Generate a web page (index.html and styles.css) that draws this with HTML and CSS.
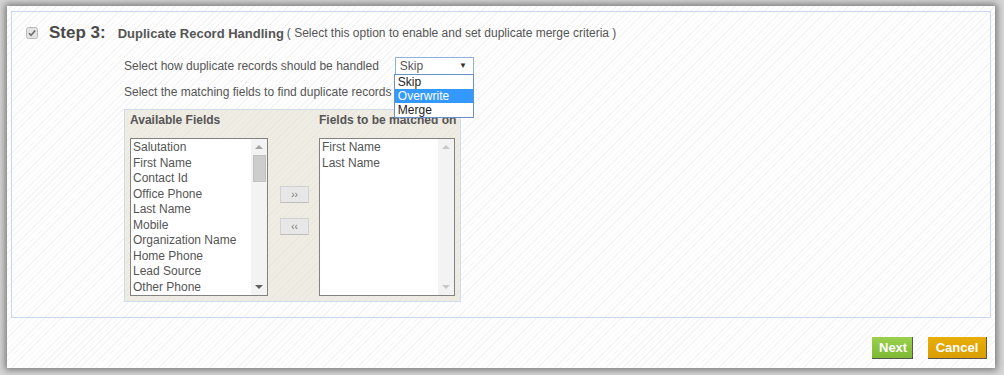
FILE: index.html
```html
<!DOCTYPE html>
<html lang="en">
<head>
    <meta charset="UTF-8">
    <title>Import - Duplicate handling</title>
    <link rel="stylesheet" href="styles.css">
</head>
<body>
<div id="page">
    <div class="step-box">
        <div class="step-head">
            <span class="check">
                <svg width="12" height="12" viewBox="0 0 12 12">
                    <rect x="0.5" y="0.5" width="11" height="11" rx="2" fill="#e4e4e4" stroke="#b8b8b8"/>
                    <path d="M3 6.2 L5 8.4 L9.2 3.4" fill="none" stroke="#6a6a6a" stroke-width="1.6"/>
                </svg>
            </span>
            <span class="step-no">Step 3:</span>
            <span class="step-title">Duplicate Record Handling</span>
            <span class="step-note">( Select this option to enable and set duplicate merge criteria )</span>
        </div>
        <div class="step-body">
            <div class="row">
                <span>Select how duplicate records should be handled</span>
                <div class="combo">
                    <div class="combo-value">Skip<span class="arrow">&#9660;</span></div>
                    <ul class="combo-list">
                        <li>Skip</li>
                        <li class="picked">Overwrite</li>
                        <li>Merge</li>
                    </ul>
                </div>
            </div>
            <div class="row">Select the matching fields to find duplicate records</div>
            <div class="fields">
                <div class="col">
                    <div class="col-title">Available Fields</div>
                    <div class="listbox left">
                        <ul>
                            <li>Salutation</li>
                            <li>First Name</li>
                            <li>Contact Id</li>
                            <li>Office Phone</li>
                            <li>Last Name</li>
                            <li>Mobile</li>
                            <li>Organization Name</li>
                            <li>Home Phone</li>
                            <li>Lead Source</li>
                            <li>Other Phone</li>
                        </ul>
                        <div class="scroll">
                            <span class="up"></span>
                            <span class="thumb"></span>
                            <span class="down"></span>
                        </div>
                    </div>
                </div>
                <div class="movers">
                    <button class="mover">&rsaquo;&rsaquo;</button>
                    <button class="mover">&lsaquo;&lsaquo;</button>
                </div>
                <div class="col">
                    <div class="col-title">Fields to be matched on</div>
                    <div class="listbox right">
                        <ul>
                            <li>First Name</li>
                            <li>Last Name</li>
                        </ul>
                        <div class="scroll off">
                            <span class="up"></span>
                            <span class="down"></span>
                        </div>
                    </div>
                </div>
            </div>
        </div>
    </div>
    <div class="actions">
        <button class="btn next">Next</button>
        <button class="btn cancel">Cancel</button>
    </div>
</div>
</body>
</html>
```

FILE: styles.css
```css
html{
    margin:0px;
    padding:0px;
}
body{
    margin:0px;
    padding:6px 9px 7px 7px;
    width:988px;
    height:362px;
    background-color:#d6d6d6;
    font-family:"Liberation Sans", Arial, sans-serif;
    color:#555;
}
#page{
    width:988px;
    height:362px;
    box-sizing:border-box;
    padding:5px 5px 0px 4px;
    background-color:#fff;
    background-image:repeating-linear-gradient(-45deg, #fff 0px, #fff 3px, #f4f4f4 3px, #f4f4f4 4px);
    box-shadow:0px 0px 7px 2px rgba(0,0,0,0.45);
    display:flex;
    flex-direction:column;
}
.step-box{
    width:980px;
    height:307px;
    box-sizing:border-box;
    border:1px solid #c9d7ef;
    padding:14px 0px 0px 14px;
}
.step-head{
    display:flex;
    align-items:center;
    height:14px;
}
.check{
    display:flex;
    width:12px;
    height:12px;
    margin-right:11px;
}
.step-no{
    font-size:17px;
    font-weight:bold;
    color:#4a4a4a;
    margin-right:12px;
}
.step-title{
    font-size:13px;
    font-weight:bold;
    color:#555;
    margin-right:3px;
}
.step-note{
    font-size:12px;
    color:#555;
}
.step-body{
    padding:17px 0px 0px 98px;
    font-size:12px;
}
.row{
    display:flex;
    align-items:center;
    height:18px;
    margin-bottom:8px;
}
.combo{
    position:relative;
    margin-left:16px;
}
.combo-value{
    width:79px;
    height:18px;
    box-sizing:border-box;
    border:1px solid #8fb0dc;
    background-color:#fff;
    padding:0px 0px 0px 4px;
    line-height:16px;
    color:#555;
    display:flex;
    justify-content:space-between;
}
.arrow{
    font-size:8px;
    color:#333;
    margin-right:6px;
}
.combo-list{
    position:absolute;
    top:17px;
    left:-1px;
    width:80px;
    box-sizing:border-box;
    margin:0px;
    padding:0px;
    list-style:none;
    border:1px solid #6b8fc9;
    background-color:#fff;
    z-index:2;
}
.combo-list li{
    height:14px;
    line-height:15px;
    padding-left:3px;
    color:#222;
}
.combo-list li.picked{
    background-color:#3399ff;
    color:#fff;
}
.fields{
    display:flex;
    width:337px;
    height:193px;
    box-sizing:border-box;
    margin-top:1px;
    padding:3px 0px 0px 5px;
    border:1px solid #cfdcf0;
    background-color:#efece4;
    background-image:repeating-linear-gradient(-45deg, #efece4 0px, #efece4 3px, #eae7df 3px, #eae7df 4px);
}
.col-title{
    font-weight:bold;
    height:14px;
    line-height:14px;
    margin-bottom:11px;
}
.listbox{
    display:flex;
    height:158px;
    box-sizing:border-box;
    border:1px solid #828282;
    background-color:#fff;
}
.listbox.left{
    width:138px;
}
.listbox.right{
    width:136px;
}
.listbox ul{
    flex:1;
    margin:0px;
    padding:1px 0px 0px 2px;
    list-style:none;
    overflow:hidden;
}
.listbox li{
    height:15.5px;
    line-height:15.5px;
    color:#555;
    white-space:nowrap;
}
.scroll{
    width:16px;
    display:flex;
    flex-direction:column;
    align-items:center;
    background-color:#f3f3f3;
}
.up, .down{
    width:0px;
    height:0px;
    border-left:4px solid transparent;
    border-right:4px solid transparent;
}
.up{
    margin-top:6px;
    border-bottom:4px solid #a3a3a3;
}
.down{
    margin-top:auto;
    margin-bottom:6px;
    border-top:4px solid #606060;
}
.scroll.off .down{
    border-top-color:#c8c8c8;
}
.scroll.off .up{
    border-bottom-color:#c8c8c8;
}
.thumb{
    width:13px;
    height:27px;
    margin-top:6px;
    background-color:#cdcdcd;
    border:1px solid #c0c0c0;
    box-sizing:border-box;
}
.movers{
    display:flex;
    flex-direction:column;
    gap:15px;
    margin:73px 10px 0px 12px;
}
.mover{
    width:29px;
    height:17px;
    padding:0px;
    border:1px solid #d2d2d2;
    border-bottom-color:#bdbdbd;
    background-color:#e7e7e7;
    color:#777;
    font-family:"Liberation Sans", Arial, sans-serif;
    font-size:10px;
    line-height:14px;
}
.actions{
    display:flex;
    justify-content:flex-end;
    gap:15px;
    margin-top:19px;
    padding-right:3px;
}
.btn{
    height:22px;
    padding:0px 7px;
    border:none;
    border-right:1px solid #555;
    border-bottom:1px solid #555;
    color:#fff;
    font-family:"Liberation Sans", Arial, sans-serif;
    font-size:13px;
    font-weight:bold;
}
.next{
    width:41px;
    background-color:#8cc63e;
    background-image:linear-gradient(#9ad04d, #7fb934);
}
.cancel{
    width:59px;
    background-color:#e2a600;
    background-image:linear-gradient(#e8ae08, #d99e00);
}
```
